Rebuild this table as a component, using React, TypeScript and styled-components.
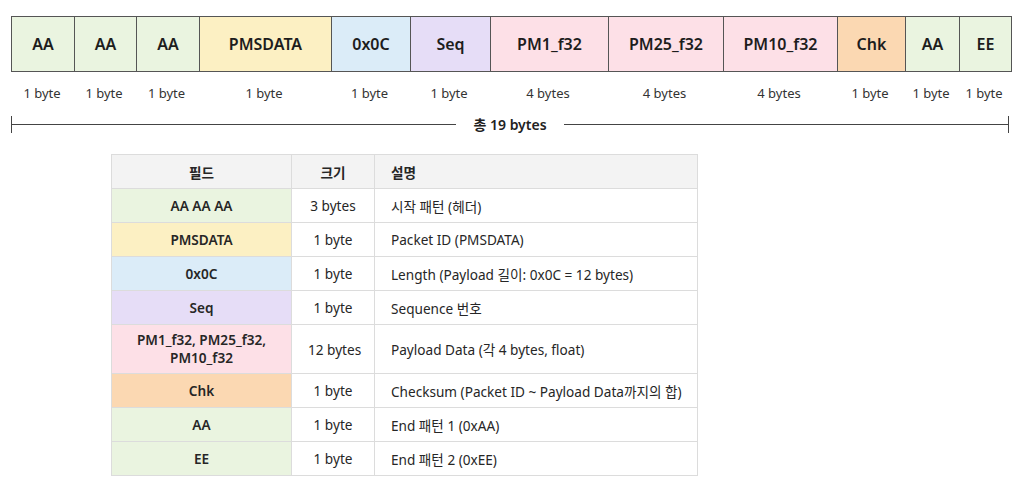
import styled, { createGlobalStyle } from "styled-components";

const GlobalStyle = createGlobalStyle`
  html, body {
    margin: 0;
    padding: 0;
    background: #ffffff;
  }
  body {
    font-family: "Noto Sans", "Noto Sans CJK KR", sans-serif;
    color: #1f1f1f;
  }
`;

const colors = {
  green: "#eaf4e0",
  yellow: "#fcf0c3",
  blue: "#dbecf8",
  purple: "#e6ddf7",
  pink: "#fde0e7",
  orange: "#fbd8b2",
};

type Tone = keyof typeof colors;

interface Field {
  name: string;
  size: string;
  width: number;
  tone: Tone;
}

const fields: Field[] = [
  { name: "AA", size: "1 byte", width: 62, tone: "green" },
  { name: "AA", size: "1 byte", width: 62, tone: "green" },
  { name: "AA", size: "1 byte", width: 63, tone: "green" },
  { name: "PMSDATA", size: "1 byte", width: 132, tone: "yellow" },
  { name: "0x0C", size: "1 byte", width: 79, tone: "blue" },
  { name: "Seq", size: "1 byte", width: 80, tone: "purple" },
  { name: "PM1_f32", size: "4 bytes", width: 118, tone: "pink" },
  { name: "PM25_f32", size: "4 bytes", width: 115, tone: "pink" },
  { name: "PM10_f32", size: "4 bytes", width: 114, tone: "pink" },
  { name: "Chk", size: "1 byte", width: 68, tone: "orange" },
  { name: "AA", size: "1 byte", width: 54, tone: "green" },
  { name: "EE", size: "1 byte", width: 52, tone: "green" },
];

const columns = fields.map((f) => `${f.width}px`).join(" ");

const rows: { field: string; size: string; desc: string; tone: Tone; tall?: boolean }[] = [
  { field: "AA AA AA", size: "3 bytes", desc: "시작 패턴 (헤더)", tone: "green" },
  { field: "PMSDATA", size: "1 byte", desc: "Packet ID (PMSDATA)", tone: "yellow" },
  { field: "0x0C", size: "1 byte", desc: "Length (Payload 길이: 0x0C = 12 bytes)", tone: "blue" },
  { field: "Seq", size: "1 byte", desc: "Sequence 번호", tone: "purple" },
  {
    field: "PM1_f32, PM25_f32, PM10_f32",
    size: "12 bytes",
    desc: "Payload Data (각 4 bytes, float)",
    tone: "pink",
    tall: true,
  },
  { field: "Chk", size: "1 byte", desc: "Checksum (Packet ID ~ Payload Data까지의 합)", tone: "orange" },
  { field: "AA", size: "1 byte", desc: "End 패턴 1 (0xAA)", tone: "green" },
  { field: "EE", size: "1 byte", desc: "End 패턴 2 (0xEE)", tone: "green" },
];

const Page = styled.div`
  padding: 16px 0 0 11px;
`;

const Packet = styled.div`
  display: grid;
  grid-template-columns: ${columns};
  width: max-content;
  border: 1px solid #555;
  box-sizing: border-box;
`;

const PacketCell = styled.div<{ $tone: Tone }>`
  height: 54px;
  display: flex;
  align-items: center;
  justify-content: center;
  background: ${(p) => colors[p.$tone]};
  border-left: 1px solid #555;
  font-size: 16px;
  font-weight: 600;
  color: #1d1d1d;
  &:first-child {
    border-left: none;
  }
`;

const SizeRow = styled.div`
  display: grid;
  grid-template-columns: ${columns};
  margin-top: 13px;
`;

const SizeLabel = styled.div`
  text-align: center;
  font-size: 13px;
  line-height: 16px;
  color: #333;
`;

const Bracket = styled.div`
  display: flex;
  align-items: center;
  width: 998px;
  height: 18px;
  margin-top: 14px;
`;

const Tick = styled.div`
  width: 1px;
  height: 17px;
  background: #444;
`;

const Line = styled.div`
  flex: 1;
  height: 1px;
  background: #444;
`;

const Total = styled.span`
  padding: 0 17px;
  font-size: 14px;
  font-weight: 600;
  color: #222;
`;

const Table = styled.table`
  margin: 21px 0 0 100px;
  width: 587px;
  border-collapse: collapse;
  font-size: 13.6px;
  color: #262626;
  table-layout: fixed;
`;

const Th = styled.th<{ $left?: boolean }>`
  height: 33px;
  padding: 0 16px;
  background: #f3f3f3;
  border: 1px solid #dcdcdc;
  font-weight: 600;
  text-align: ${(p) => (p.$left ? "left" : "center")};
`;

const FieldCell = styled.td<{ $tone: Tone; $tall?: boolean }>`
  height: ${(p) => (p.$tall ? "48px" : "33px")};
  padding: 0 10px;
  background: ${(p) => colors[p.$tone]};
  border: 1px solid #dcdcdc;
  font-weight: 600;
  text-align: center;
  line-height: 18px;
`;

const Td = styled.td<{ $left?: boolean }>`
  padding: 0 16px;
  border: 1px solid #dcdcdc;
  text-align: ${(p) => (p.$left ? "left" : "center")};
  white-space: nowrap;
`;

export default function App() {
  return (
    <>
      <GlobalStyle />
      <Page>
        <Packet>
          {fields.map((f, i) => (
            <PacketCell key={i} $tone={f.tone}>
              {f.name}
            </PacketCell>
          ))}
        </Packet>
        <SizeRow>
          {fields.map((f, i) => (
            <SizeLabel key={i}>{f.size}</SizeLabel>
          ))}
        </SizeRow>
        <Bracket>
          <Tick />
          <Line />
          <Total>총 19 bytes</Total>
          <Line />
          <Tick />
        </Bracket>
        <Table>
          <colgroup>
            <col style={{ width: 180 }} />
            <col style={{ width: 83 }} />
            <col />
          </colgroup>
          <thead>
            <tr>
              <Th>필드</Th>
              <Th>크기</Th>
              <Th $left>설명</Th>
            </tr>
          </thead>
          <tbody>
            {rows.map((r, i) => (
              <tr key={i}>
                <FieldCell $tone={r.tone} $tall={r.tall}>
                  {r.field}
                </FieldCell>
                <Td>{r.size}</Td>
                <Td $left>{r.desc}</Td>
              </tr>
            ))}
          </tbody>
        </Table>
      </Page>
    </>
  );
}
